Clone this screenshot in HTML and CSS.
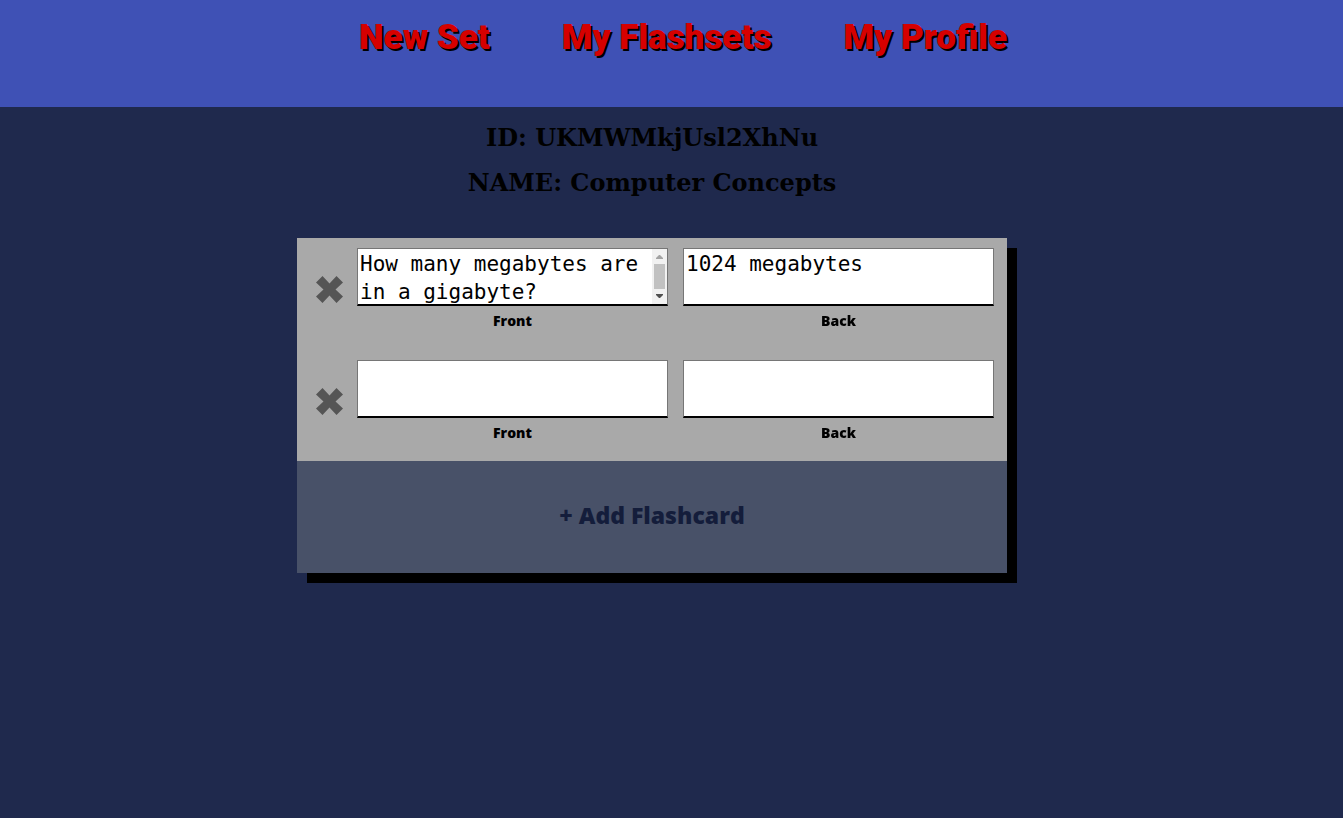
FILE: index.html
```html
<!DOCTYPE html>
<html lang="en">
<head>
<meta charset="utf-8">
<meta name="viewport" content="width=device-width, initial-scale=1">
<title>Flashcards</title>
<link rel="stylesheet" href="styles.css">
</head>
<body>
<header class="site-header">
  <nav class="nav">
    <a class="nav-link" href="#new">New Set</a>
    <a class="nav-link" href="#sets">My Flashsets</a>
    <a class="nav-link" href="#profile">My Profile</a>
  </nav>
</header>
<main class="page">
  <h2 class="set-info">ID: UKMWMkjUsl2XhNu</h2>
  <h2 class="set-info">NAME: Computer Concepts</h2>
  <form class="set">
    <div class="flashcard">
      <button class="remove" type="button" aria-label="Remove flashcard 1">
        <svg class="remove-icon" viewBox="0 0 27 27" aria-hidden="true"><path d="M6.500 0 13.500 7.500 20.500 0 27 6.500 19.500 13.500 27 20.500 20.500 27 13.500 19.500 6.500 27 0 20.500 7.500 13.500 0 6.500Z"/></svg>
      </button>
      <div class="side">
        <textarea class="side-text side-text-long" id="front-1">How many megabytes are in a gigabyte?</textarea>
        <svg class="scrollbar" viewBox="0 0 15 55" aria-hidden="true">
          <path fill="#f1f1f1" d="M0 0h15v55H0z"/>
          <path fill="#c1c1c1" d="M2 15h11v25H2z"/>
          <path fill="#a3a3a3" d="M4 10h7v-1L8 6H7L4 9z"/>
          <path fill="#505050" d="M4 45h7v1l-3 3H7l-3-3z"/>
        </svg>
        <label class="side-label" for="front-1">Front</label>
      </div>
      <div class="side">
        <textarea class="side-text" id="back-1">1024 megabytes</textarea>
        <label class="side-label" for="back-1">Back</label>
      </div>
    </div>
    <div class="flashcard">
      <button class="remove" type="button" aria-label="Remove flashcard 2">
        <svg class="remove-icon" viewBox="0 0 27 27" aria-hidden="true"><path d="M6.500 0 13.500 7.500 20.500 0 27 6.500 19.500 13.500 27 20.500 20.500 27 13.500 19.500 6.500 27 0 20.500 7.500 13.500 0 6.500Z"/></svg>
      </button>
      <div class="side">
        <textarea class="side-text" id="front-2"></textarea>
        <label class="side-label" for="front-2">Front</label>
      </div>
      <div class="side">
        <textarea class="side-text" id="back-2"></textarea>
        <label class="side-label" for="back-2">Back</label>
      </div>
    </div>
    <button class="add" type="button">+ Add Flashcard</button>
  </form>
</main>
</body>
</html>
```
FILE: styles.css
```css
* {
  box-sizing: border-box;
}

body {
  margin: 0;
  background: #1f294d;
  color: #000;
}

.site-header {
  padding: 14px 0 45px 23px;
  background: #3f51b5;
}

.nav {
  display: flex;
  flex-wrap: wrap;
  justify-content: center;
  gap: 0 72px;
}

.nav-link {
  color: #d60000;
  font: 900 35px/48px Roboto, sans-serif;
  text-decoration: none;
  text-shadow: 2px 2px 0 #000;
}

.page {
  padding: 17px 39px 40px 0;
}

.set-info {
  margin: 0 0 17px;
  font: bold 24px/28px "DejaVu Serif", serif;
  text-align: center;
}

.set {
  max-width: 710px;
  margin: 41px auto 0;
  background: #a9a9a9;
  box-shadow: 10px 10px 0 #000;
}

.flashcard {
  display: grid;
  grid-template-columns: 34px 1fr 1fr;
  gap: 0 15px;
  align-items: start;
  padding: 10px 13px 16px 11px;
}

.flashcard + .flashcard {
  padding-bottom: 15px;
}

.remove {
  display: flex;
  justify-content: center;
  padding: 28px 0 0 9px;
  border: 0;
  background: none;
  color: #555;
  cursor: pointer;
}

.remove-icon {
  width: 27px;
  height: 27px;
  flex: none;
  fill: currentColor;
}

.side {
  position: relative;
  display: flex;
  flex-direction: column;
}

.side-text {
  width: 100%;
  height: 58px;
  padding: 1px 2px 0;
  border: 1px solid #767676;
  border-bottom: 2px solid #000;
  background: #fff;
  color: #000;
  font: 21px/28px "DejaVu Sans Mono", monospace;
  resize: none;
}

.side-text-long {
  padding-right: 17px;
}

.scrollbar {
  position: absolute;
  top: 1px;
  right: 1px;
  width: 15px;
  height: 55px;
}

.side-label {
  padding: 3px 0 1px;
  font: 800 14px/24px "Open Sans", sans-serif;
  text-align: center;
}

.add {
  display: block;
  width: 100%;
  padding: 34px 20px 38px;
  border: 0;
  background: #485168;
  color: #141d3b;
  font: 800 23px/40px "Open Sans", sans-serif;
  cursor: pointer;
}
```
